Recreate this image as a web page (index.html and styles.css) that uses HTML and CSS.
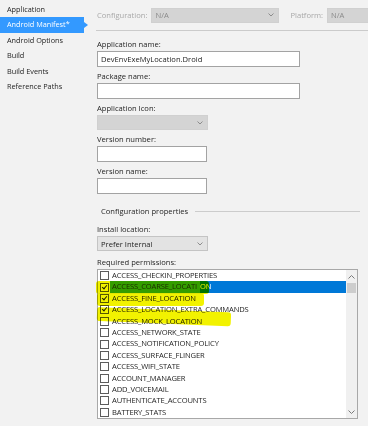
FILE: index.html
```html
<!DOCTYPE html>
<html lang="en">
<head>
    <meta charset="UTF-8">
    <title>Android Manifest</title>
    <link rel="stylesheet" href="styles.css">
</head>
<body>
    <div class="page">
        <nav class="nav">
            <div class="nav-item">Application</div>
            <div class="nav-item active">Android Manifest*</div>
            <div class="nav-item">Android Options</div>
            <div class="nav-item">Build</div>
            <div class="nav-item">Build Events</div>
            <div class="nav-item">Reference Paths</div>
        </nav>

        <main class="main">
            <div class="topbar">
                <span class="top-label">Configuration:</span>
                <div class="combo disabled config-combo">
                    <span>N/A</span>
                    <svg class="chev" width="6" height="4" viewBox="0 0 6 4"><polyline points="0.5,0.5 3,3 5.5,0.5" /></svg>
                </div>
                <span class="top-label platform-label">Platform:</span>
                <div class="combo disabled platform-combo"><span>N/A</span></div>
            </div>

            <div class="form">
                <div class="field">
                    <label>Application name:</label>
                    <div class="textbox wide">DevEnvExeMyLocation.Droid</div>
                </div>
                <div class="field">
                    <label>Package name:</label>
                    <div class="textbox wide"></div>
                </div>
                <div class="field">
                    <label>Application Icon:</label>
                    <div class="combo disabled icon-combo">
                        <span></span>
                        <svg class="chev" width="6" height="4" viewBox="0 0 6 4"><polyline points="0.5,0.5 3,3 5.5,0.5" /></svg>
                    </div>
                </div>
                <div class="field">
                    <label>Version number:</label>
                    <div class="textbox narrow"></div>
                </div>
                <div class="field">
                    <label>Version name:</label>
                    <div class="textbox narrow"></div>
                </div>

                <div class="group-title">Configuration properties</div>

                <div class="field install-field">
                    <label>Install location:</label>
                    <div class="combo install-combo">
                        <span>Prefer Internal</span>
                        <svg class="chev" width="6" height="4" viewBox="0 0 6 4"><polyline points="0.5,0.5 3,3 5.5,0.5" /></svg>
                    </div>
                </div>
                <div class="field">
                    <label>Required permissions:</label>
                    <div class="perm-list">
                        <div class="perm-rows">
                            <div class="perm"><span class="box"></span><span class="perm-name">ACCESS_CHECKIN_PROPERTIES</span></div>
                            <div class="perm selected"><span class="box checked"></span><span class="perm-name"><span class="marked">ACCESS_COARSE_LOCATI</span>ON</span></div>
                            <div class="perm"><span class="box checked"></span><span class="perm-name">ACCESS_FINE_LOCATION</span></div>
                            <div class="perm"><span class="box checked"></span><span class="perm-name">ACCESS_LOCATION_EXTRA_COMMANDS</span></div>
                            <div class="perm"><span class="box"></span><span class="perm-name">ACCESS_MOCK_LOCATION</span></div>
                            <div class="perm"><span class="box"></span><span class="perm-name">ACCESS_NETWORK_STATE</span></div>
                            <div class="perm"><span class="box"></span><span class="perm-name">ACCESS_NOTIFICATION_POLICY</span></div>
                            <div class="perm"><span class="box"></span><span class="perm-name">ACCESS_SURFACE_FLINGER</span></div>
                            <div class="perm"><span class="box"></span><span class="perm-name">ACCESS_WIFI_STATE</span></div>
                            <div class="perm"><span class="box"></span><span class="perm-name">ACCOUNT_MANAGER</span></div>
                            <div class="perm"><span class="box"></span><span class="perm-name">ADD_VOICEMAIL</span></div>
                            <div class="perm"><span class="box"></span><span class="perm-name">AUTHENTICATE_ACCOUNTS</span></div>
                            <div class="perm"><span class="box"></span><span class="perm-name">BATTERY_STATS</span></div>
                        </div>
                        <div class="scrollbar">
                            <div class="sb-btn"><svg width="7" height="4" viewBox="0 0 7 4"><polyline points="0.5,3.5 3.5,0.5 6.5,3.5" /></svg></div>
                            <div class="sb-thumb"></div>
                            <div class="sb-track"></div>
                            <div class="sb-btn"><svg width="7" height="4" viewBox="0 0 7 4"><polyline points="0.5,0.5 3.5,3.5 6.5,0.5" /></svg></div>
                        </div>

                        <!-- highlighter marks drawn over the list -->
                        <div class="marker mark-coarse"></div>
                        <div class="marker mark-fine"></div>
                        <div class="marker mark-extra"></div>
                    </div>
                </div>
            </div>
        </main>
    </div>
</body>
</html>
```

FILE: styles.css
```css
body {
    margin: 0;
    background: #f2f2f2;
    font-family: "Open Sans", "Noto Sans", sans-serif;
    font-size: 7.6px;
    color: #1e1e1e;
}
.page {
    display: flex;
    height: 426px;
    overflow: hidden;
}
.nav {
    width: 96px;
    flex: none;
    padding-top: 2px;
    font-size: 7.3px;
}
.nav-item {
    position: relative;
    width: 77px;
    height: 15.4px;
    line-height: 15.4px;
    padding-left: 7px;
    white-space: nowrap;
}
.nav-item.active {
    background: #3399ff;
    color: #fff;
}
.nav-item.active::after {
    content: "";
    position: absolute;
    right: -4px;
    top: 5px;
    border-left: 4px solid #3399ff;
    border-top: 3px solid transparent;
    border-bottom: 3px solid transparent;
}
.main {
    flex: 1;
    min-width: 0;
}
.topbar {
    display: flex;
    align-items: center;
    height: 30px;
    padding-left: 1px;
    border-bottom: 1px solid #cbcbcb;
}
.top-label {
    color: #a8a8a8;
    margin-right: 4px;
}
.platform-label {
    margin-left: 11px;
}
.combo {
    display: flex;
    align-items: center;
    justify-content: space-between;
    box-sizing: border-box;
    height: 15px;
    padding: 0 4px 0 3px;
    background: #e3e3e3;
    border: 1px solid #c4c4c4;
}
.combo.disabled {
    background: #d4d4d4;
    border-color: #d0d0d0;
    color: #8a8a8a;
}
.chev polyline {
    fill: none;
    stroke: #8c8c8c;
    stroke-width: 1;
}
.config-combo {
    width: 128px;
}
.platform-combo {
    flex: 1;
    border-right: none;
}
.icon-combo,
.install-combo {
    width: 111px;
}
.form {
    padding: 6px 0 0 1px;
}
.field {
    margin-bottom: 2px;
}
.install-field {
    margin-bottom: 4px;
}
.field label {
    display: block;
    height: 14px;
    line-height: 14px;
}
.textbox {
    box-sizing: border-box;
    height: 16px;
    line-height: 14px;
    padding-left: 3px;
    background: #fff;
    border: 1px solid #a3a3a3;
}
.wide {
    width: 203px;
}
.narrow {
    width: 110px;
}
.group-title {
    display: flex;
    align-items: center;
    height: 14px;
    margin: 10px 0 4px;
    padding-left: 4px;
}
.group-title::after {
    content: "";
    flex: 1;
    margin: 0 8px 0 7px;
    border-top: 1px solid #cccccc;
}
.perm-list {
    position: relative;
    display: flex;
    box-sizing: border-box;
    width: 261px;
    height: 150px;
    background: #fff;
    border: 1px solid #a8a8a8;
}
.perm-rows {
    flex: 1;
}
.perm {
    display: flex;
    align-items: center;
    height: 11.4px;
    white-space: nowrap;
    letter-spacing: -0.15px;
}
.box {
    box-sizing: border-box;
    width: 9px;
    height: 9px;
    margin: 0 1px 0 2px;
    flex: none;
    background: #fff;
    border: 1px solid #5c5c5c;
    position: relative;
}
.box.checked::after {
    content: "";
    position: absolute;
    left: 2px;
    top: 0;
    width: 2px;
    height: 4px;
    border-right: 1px solid #222;
    border-bottom: 1px solid #222;
    transform: rotate(40deg);
}
.perm-name {
    flex: 1;
    height: 100%;
    line-height: 11.4px;
    padding-left: 2px;
}
.selected .perm-name {
    background: #0078d7;
    color: #fff;
}
.selected .marked {
    display: inline-block;
    height: 100%;
    margin-left: -2px;
    padding: 0 3px 0 2px;
    background: #36a624;
    color: #1c2a10;
}
.scrollbar {
    display: flex;
    flex-direction: column;
    width: 11px;
    background: #f0f0f0;
}
.sb-btn {
    display: flex;
    align-items: center;
    justify-content: center;
    height: 13px;
}
.sb-btn polyline {
    fill: none;
    stroke: #7a7a7a;
    stroke-width: 1;
}
.sb-thumb {
    height: 10px;
    margin: 0 1px;
    background: #cdcdcd;
}
.sb-track {
    flex: 1;
}
.marker {
    position: absolute;
    background: #f2f200;
    mix-blend-mode: multiply;
    border-radius: 3px;
}
.mark-coarse {
    left: -2px;
    top: 11px;
    width: 113px;
    height: 13px;
}
.mark-fine {
    left: -1px;
    top: 23px;
    width: 107px;
    height: 13px;
}
.mark-extra {
    left: -1px;
    top: 37px;
    width: 134px;
    height: 14px;
    transform: rotate(2.3deg);
    transform-origin: left center;
}
```
